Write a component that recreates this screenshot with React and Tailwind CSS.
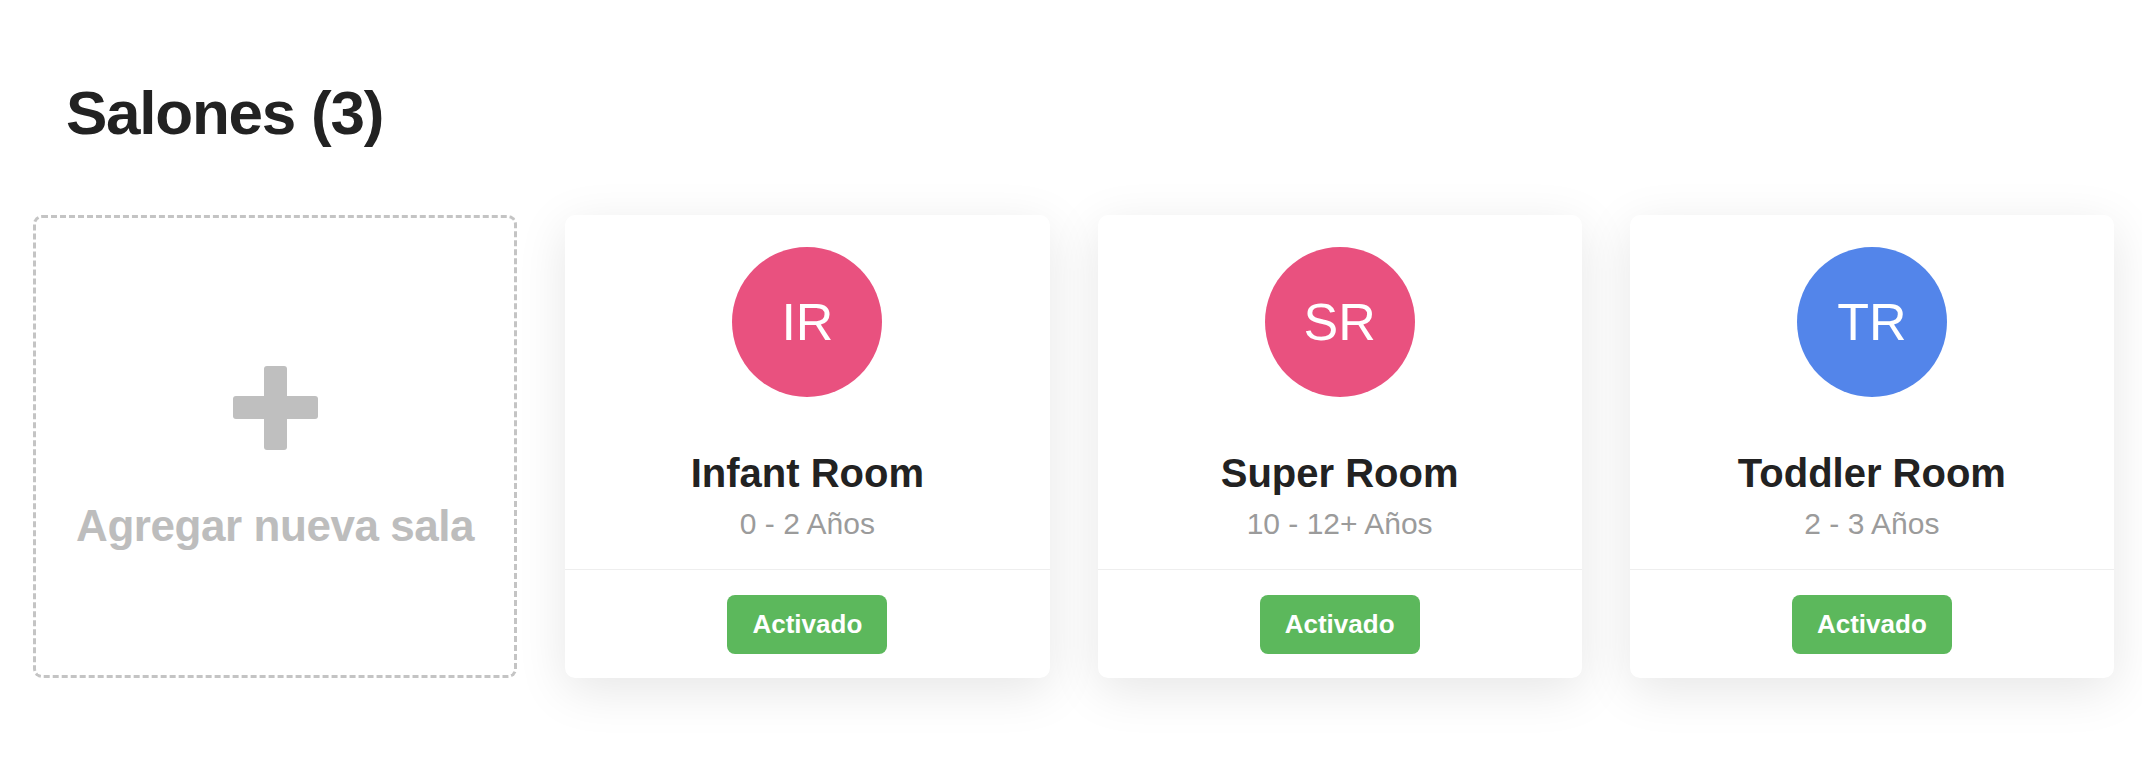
const rooms = [
  { id: 1, initials: "IR", name: "Infant Room", ages: "0 - 2 Años", color: "bg-[#e9517f]" },
  { id: 2, initials: "SR", name: "Super Room", ages: "10 - 12+ Años", color: "bg-[#e9517f]" },
  { id: 3, initials: "TR", name: "Toddler Room", ages: "2 - 3 Años", color: "bg-[#5385ea]" },
];

function AddRoomCard() {
  return (
    <button className="flex flex-col items-center justify-center rounded-[9px] border-[3px] border-dashed border-[#c4c4c4] bg-white pt-[24px]">
      {/* plus */}
      <div className="relative h-[84px] w-[85px]">
        <div className="absolute left-[31px] top-0 h-[84px] w-[23px] rounded-[3px] bg-[#bfbfbf]" />
        <div className="absolute left-0 top-[30px] h-[23px] w-[85px] rounded-[3px] bg-[#bfbfbf]" />
      </div>
      <span className="mt-[50px] text-[44px] font-bold leading-[52px] tracking-[-0.01em] text-[#bdbdbd]">
        Agregar nueva sala
      </span>
    </button>
  );
}

function RoomCard({ room }) {
  return (
    <div className="flex flex-col rounded-[10px] bg-white shadow-[0_12px_50px_rgba(0,0,0,0.1)]">
      <div className="flex flex-col items-center pt-[32px] pb-[27px]">
        <div
          className={`flex h-[150px] w-[150px] items-center justify-center rounded-full ${room.color}`}
        >
          <span className="text-[52px] leading-none text-white">
            {room.initials}
          </span>
        </div>

        <h2 className="mt-[52px] text-[40px] font-bold leading-[48px] text-[#222222]">
          {room.name}
        </h2>

        <p className="mt-[9px] text-[30px] leading-[36px] text-[#9b9b9b]">
          {room.ages}
        </p>
      </div>

      <div className="flex justify-center border-t border-[#eeeeee] pt-[25px] pb-[24px]">
        <span className="flex h-[59px] w-[160px] items-center justify-center rounded-[8px] bg-[#5cb85c] text-[26px] font-bold text-white">
          Activado
        </span>
      </div>
    </div>
  );
}

export default function App() {
  return (
    <div
      className="min-h-screen bg-white pt-[76px]"
      style={{ fontFamily: '"Liberation Sans", Arial, sans-serif' }}
    >
      <h1 className="pl-[66px] text-[62px] font-bold leading-[74px] tracking-[-0.02em] text-[#222222]">
        Salones ({rooms.length})
      </h1>

      <div className="mt-[65px] grid w-[2114px] grid-cols-4 gap-x-[48px] pl-[33px]">
        <AddRoomCard />
        {rooms.map((room) => (
          <RoomCard key={room.id} room={room} />
        ))}
      </div>
    </div>
  );
}
